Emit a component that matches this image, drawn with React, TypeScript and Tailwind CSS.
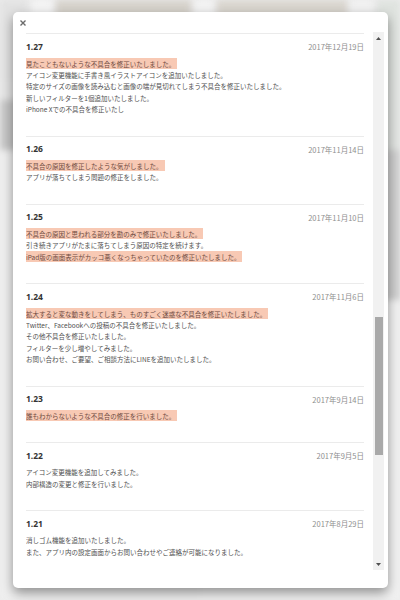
import React from "react";

type Line = { text: string; hl?: boolean };
type Release = { version: string; date: string; lines: Line[] };

const releases: Release[] = [
  {
    version: "1.27",
    date: "2017年12月19日",
    lines: [
      { text: "見たこともないような不具合を修正いたしました。", hl: true },
      { text: "アイコン変更機能に手書き風イラストアイコンを追加いたしました。" },
      { text: "特定のサイズの画像を読み込むと画像の端が見切れてしまう不具合を修正いたしました。" },
      { text: "新しいフィルターを1個追加いたしました。" },
      { text: "iPhone Xでの不具合を修正いたし" },
    ],
  },
  {
    version: "1.26",
    date: "2017年11月14日",
    lines: [
      { text: "不具合の原因を修正したような気がしました。", hl: true },
      { text: "アプリが落ちてしまう問題の修正をしました。" },
    ],
  },
  {
    version: "1.25",
    date: "2017年11月10日",
    lines: [
      { text: "不具合の原因と思われる部分を勘のみで修正いたしました。", hl: true },
      { text: "引き続きアプリがたまに落ちてしまう原因の特定を続けます。" },
      { text: "iPad版の画面表示がカッコ悪くなっちゃっていたのを修正いたしました。", hl: true },
    ],
  },
  {
    version: "1.24",
    date: "2017年11月6日",
    lines: [
      { text: "拡大すると変な動きをしてしまう、ものすごく迷惑な不具合を修正いたしました。", hl: true },
      { text: "Twitter、Facebookへの投稿の不具合を修正いたしました。" },
      { text: "その他不具合を修正いたしました。" },
      { text: "フィルターを少し増やしてみました。" },
      { text: "お問い合わせ、ご要望、ご相談方法にLINEを追加いたしました。" },
    ],
  },
  {
    version: "1.23",
    date: "2017年9月14日",
    lines: [{ text: "誰もわからないような不具合の修正を行いました。", hl: true }],
  },
  {
    version: "1.22",
    date: "2017年9月5日",
    lines: [
      { text: "アイコン変更機能を追加してみました。" },
      { text: "内部構造の変更と修正を行いました。" },
    ],
  },
  {
    version: "1.21",
    date: "2017年8月29日",
    lines: [
      { text: "消しゴム機能を追加いたしました。" },
      { text: "また、アプリ内の設定画面からお問い合わせやご連絡が可能になりました。" },
    ],
  },
];

const font = { fontFamily: '"Noto Sans CJK JP", "Noto Sans", sans-serif' };

export default function App() {
  return (
    <div className="relative w-[400px] h-[600px] overflow-hidden bg-[#ececec]" style={font}>
      {/* blurred page behind the modal */}
      <div className="flex flex-col w-full h-full blur-[3px]">
        <div className="flex h-[80px] gap-[4px]">
          <div className="w-[28px] bg-[#e2e2e2]" />
          <div className="w-[20px] bg-[#f4f4f4]" />
          <div className="w-[135px] bg-[#d6d2cb]" />
          <div className="w-[18px] bg-[#f3f3f3]" />
          <div className="w-[130px] bg-[#d9d5ce]" />
          <div className="w-[22px] bg-[#f1f1f1]" />
          <div className="flex-1 bg-[#dfe3df]" />
        </div>
        <div className="flex flex-1">
          <div className="flex flex-col w-[200px]">
            <div className="h-[20px] bg-[#e4e4e4]" />
            <div className="h-[50px] bg-[#c6c6c6]" />
            <div className="flex-1 bg-[#efefef]" />
          </div>
          <div className="flex flex-col flex-1">
            <div className="h-[70px] bg-[#e0e3e0]" />
            <div className="h-[150px] bg-[#cdcdcd]" />
            <div className="flex-1 bg-[#f2f2f2]" />
          </div>
        </div>
      </div>

      {/* Modal */}
      <div className="absolute left-[13px] top-[12px] w-[375px] h-[576px] rounded-[5px] bg-white shadow-[0_5px_12px_rgba(0,0,0,0.4)] flex flex-col">
        <div className="h-[20px] pl-[7px] pt-[8px]">
          <svg width="6" height="6" viewBox="0 0 6 6">
            <path d="M0.5 0.5L5.5 5.5M5.5 0.5L0.5 5.5" stroke="#6b6b6b" strokeWidth="1.4" />
          </svg>
        </div>

        <div className="flex h-[538px]">
          <div className="ml-[13px] w-[338px] overflow-hidden pt-[1px]">
            {releases.map((r) => (
              <div key={r.version} className="border-t border-[#ebebeb] pt-[6px] pb-[20px]">
                <div className="flex h-[14px] items-center justify-between">
                  <span
                    className="text-[8.5px] font-bold text-[#333]"
                    style={{ fontFamily: '"Noto Sans", "Open Sans", sans-serif' }}
                  >
                    {r.version}
                  </span>
                  <span className="text-[7.5px] text-[#8e8e8e]">{r.date}</span>
                </div>
                <div className="mt-[4px] text-[6.5px] leading-[11.5px] text-[#4f4f4f]">
                  {r.lines.map((l, j) => (
                    <div key={j} className="whitespace-nowrap">
                      {l.hl ? (
                        <span className="-ml-[2px] px-[2px] py-[0.5px] bg-[#f8c9b4] text-[#6e4a3f]">
                          {l.text}
                        </span>
                      ) : (
                        l.text
                      )}
                    </div>
                  ))}
                </div>
              </div>
            ))}
          </div>

          {/* scrollbar */}
          <div className="ml-[9px] w-[11px] bg-[#f1f1f1] flex flex-col items-center">
            <div className="h-[12px] flex items-center justify-center">
              <svg width="5" height="3" viewBox="0 0 5 3">
                <path d="M0 3L2.5 0L5 3Z" fill="#505050" />
              </svg>
            </div>
            <div className="h-[273px]" />
            <div className="w-[8px] h-[138px] bg-[#a9a9a9]" />
            <div className="flex-1" />
            <div className="h-[12px] flex items-center justify-center">
              <svg width="5" height="3" viewBox="0 0 5 3">
                <path d="M0 0L5 0L2.5 3Z" fill="#505050" />
              </svg>
            </div>
          </div>
        </div>
      </div>
    </div>
  );
}
